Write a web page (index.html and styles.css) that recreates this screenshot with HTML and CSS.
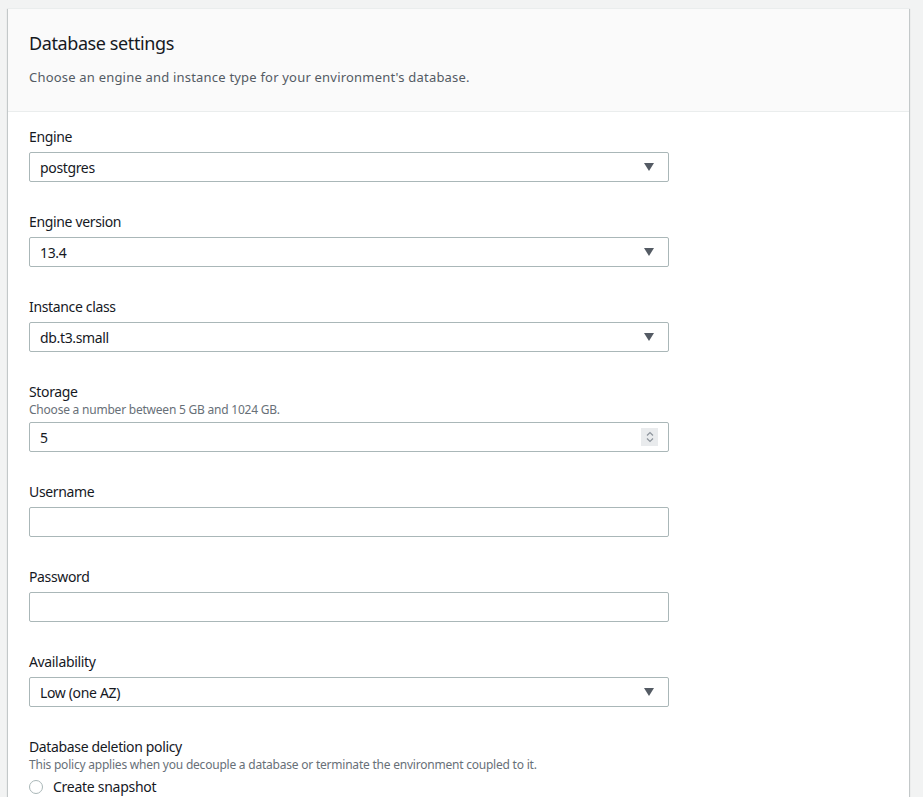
FILE: index.html
```html
<!DOCTYPE html>
<html>
<head>
<meta charset="utf-8">
<link rel="stylesheet" href="styles.css">
</head>
<body>
<div class="panel">
  <div class="panel-header">
    <h2 class="title">Database settings</h2>
    <p class="subtitle">Choose an engine and instance type for your environment's database.</p>
  </div>
  <div class="panel-body">
    <div class="field">
      <div class="field-head"><div class="label">Engine</div></div>
      <div class="control select"><span>postgres</span><svg class="caret" width="10" height="8" viewBox="0 0 10 8"><path d="M0 0h10L5 8z"/></svg></div>
    </div>
    <div class="field">
      <div class="field-head"><div class="label">Engine version</div></div>
      <div class="control select"><span>13.4</span><svg class="caret" width="10" height="8" viewBox="0 0 10 8"><path d="M0 0h10L5 8z"/></svg></div>
    </div>
    <div class="field">
      <div class="field-head"><div class="label">Instance class</div></div>
      <div class="control select"><span>db.t3.small</span><svg class="caret" width="10" height="8" viewBox="0 0 10 8"><path d="M0 0h10L5 8z"/></svg></div>
    </div>
    <div class="field">
      <div class="field-head"><div class="label">Storage</div><div class="desc">Choose a number between 5 GB and 1024 GB.</div></div>
      <div class="control number"><span>5</span><span class="spin"><svg width="10" height="14" viewBox="0 0 10 14"><path d="M2 5.5L5 2.5 8 5.5M2 8.5L5 11.5 8 8.5" fill="none" stroke="#8d949c" stroke-width="1.2"/></svg></span></div>
    </div>
    <div class="field">
      <div class="field-head"><div class="label">Username</div></div>
      <div class="control"></div>
    </div>
    <div class="field">
      <div class="field-head"><div class="label">Password</div></div>
      <div class="control"></div>
    </div>
    <div class="field">
      <div class="field-head"><div class="label">Availability</div></div>
      <div class="control select"><span>Low (one AZ)</span><svg class="caret" width="10" height="8" viewBox="0 0 10 8"><path d="M0 0h10L5 8z"/></svg></div>
    </div>
    <div class="field">
      <div class="field-head"><div class="label">Database deletion policy</div><div class="desc">This policy applies when you decouple a database or terminate the environment coupled to it.</div></div>
      <div class="radio"><span class="circle"></span><span>Create snapshot</span></div>
    </div>
  </div>
</div>
</body>
</html>
```
FILE: styles.css
```css
html, body {
  margin: 0;
  padding: 0;
}
body {
  background: #f2f3f3;
  padding: 8px;
  font-family: "Noto Sans", "Open Sans", sans-serif;
  color: #16191f;
}
.panel {
  width: 901px;
  background: #fff;
  border-top: 1px solid #eaeded;
  box-shadow: 0 1px 1px 0 rgba(0, 28, 36, 0.3), 1px 1px 1px 0 rgba(0, 28, 36, 0.15), -1px 1px 1px 0 rgba(0, 28, 36, 0.15);
}
.panel-header {
  background: #fafafa;
  border-bottom: 1px solid #eaeded;
  padding: 21px 20px 24px 21px;
}
.title {
  margin: 0;
  font-size: 18px;
  font-weight: 400;
  line-height: 26px;
  letter-spacing: -0.4px;
  color: #16191f;
}
.subtitle {
  margin: 11px 0 0;
  font-size: 13px;
  line-height: 20px;
  letter-spacing: 0.2px;
  color: #545b64;
}
.panel-body {
  padding: 15px 20px 0 21px;
  display: flex;
  flex-direction: column;
  gap: 30px;
}
.field-head {
  margin-bottom: 5px;
}
.label {
  font-size: 14px;
  line-height: 20px;
  letter-spacing: -0.35px;
  color: #16191f;
}
.desc {
  font-size: 12px;
  line-height: 15px;
  letter-spacing: -0.22px;
  color: #687078;
}
.control {
  box-sizing: border-box;
  width: 640px;
  height: 30px;
  border: 1px solid #aab7b8;
  border-radius: 2px;
  background: #fff;
  display: flex;
  align-items: center;
  padding: 0 14px 0 10px;
  font-size: 14px;
  letter-spacing: -0.35px;
  color: #16191f;
}
.control span:first-child {
  flex: 1;
}
.caret {
  fill: #545b64;
}
.number {
  padding-right: 10px;
}
.spin {
  width: 17px;
  height: 18px;
  background: #e9ebed;
  display: flex;
  align-items: center;
  justify-content: center;
}
.radio {
  display: flex;
  align-items: center;
  font-size: 14px;
  line-height: 20px;
  letter-spacing: -0.27px;
  margin-top: 1px;
}
.circle {
  box-sizing: border-box;
  width: 14px;
  height: 14px;
  border: 1px solid #aab7b8;
  border-radius: 50%;
  margin: 0 10px 0 0;
  flex: none !important;
}
```
